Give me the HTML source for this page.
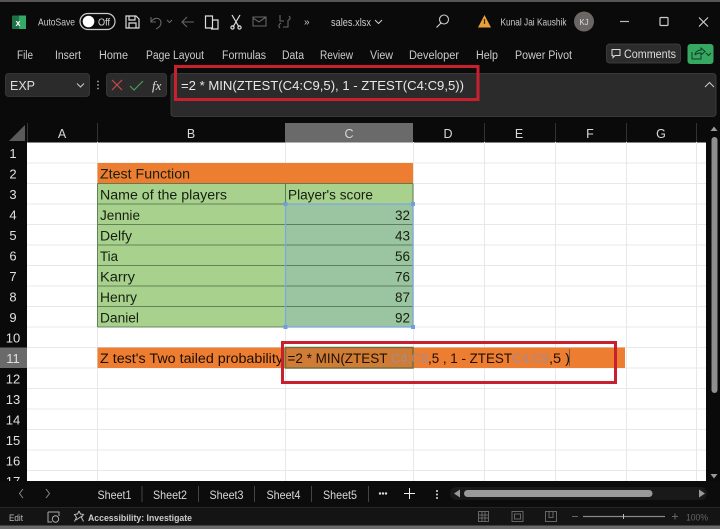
<!DOCTYPE html>
<html><head><meta charset="utf-8"><style>
html,body{margin:0;padding:0;background:#0a0a0a;width:720px;height:529px;overflow:hidden}
svg{display:block}
text{font-family:"Liberation Sans",sans-serif}
</style></head><body>
<svg width="720" height="529" viewBox="0 0 720 529" xmlns="http://www.w3.org/2000/svg">
<rect width="720" height="529" fill="#0a0a0a"/>
<rect width="720" height="2" fill="#555"/>
<!-- title bar -->
<rect x="12" y="15.500" width="14" height="13.500" rx="1" fill="#1e7145"/><rect x="19" y="15.500" width="7" height="13.500" fill="#33a867"/>
<text x="15.500" y="26" font-size="9" font-weight="bold" fill="#fff">x</text>
<text x="38" y="25.500" font-size="10.500" fill="#ccc" textLength="37" lengthAdjust="spacingAndGlyphs">AutoSave</text>
<rect x="80" y="13.500" width="35" height="16" rx="8" fill="none" stroke="#ccc" stroke-width="1.200"/>
<circle cx="88.500" cy="21.500" r="5.800" fill="#fff"/>
<text x="98" y="25.500" font-size="10" fill="#ddd" textLength="12" lengthAdjust="spacingAndGlyphs">Off</text>
<g fill="none" stroke="#ddd" stroke-width="1.200">
<path d="M126 16h10l3 3v9h-13z M129 16v4h6v-4 M129 28v-5h7v5"/>
<path d="M205.500 16h7v12h-7z M212 20h6v9h-7"/>
<path d="M232 15l7 12 M240 15l-7 12"/><circle cx="232.500" cy="27.500" r="1.600"/><circle cx="239.500" cy="27.500" r="1.600"/>
</g>
<g fill="none" stroke="#666" stroke-width="1.100">
<path d="M151 17v5h5 M151 22c3-5 10-5 10 1 0 3-3 5-5 6"/>
<path d="M167 20l2.500 2.500 2.500-2.500"/>
<path d="M194 22h-12 M187 17l-5 5 5 5"/>
<path d="M253 17h13v9h-13z M253 18l6 4 7-5"/>
<path d="M280 15v6h4 M288 20v7h-5 M280 28c-2-2-1-4 1-5 M289 16c2 2 1 4-1 4"/>
</g>
<text x="304" y="25" font-size="10" fill="#ccc">»</text>
<text x="331" y="26" font-size="11" fill="#ccc" textLength="40" lengthAdjust="spacingAndGlyphs">sales.xlsx</text>
<path d="M375 20l3.500 3.500 3.500-3.500" fill="none" stroke="#ccc" stroke-width="1"/>
<circle cx="444" cy="19.500" r="4.500" fill="none" stroke="#ccc" stroke-width="1.100"/><path d="M441 23l-4.500 4.500" stroke="#ccc" stroke-width="1.200"/>
<path d="M484.500 15l6.500 12.500h-13z" fill="#e8a13a"/><path d="M484.500 19v5" stroke="#4a2a00" stroke-width="1.200"/>
<text x="500.500" y="25.500" font-size="10.500" fill="#ccc" textLength="66" lengthAdjust="spacingAndGlyphs">Kunal Jai Kaushik</text>
<circle cx="584" cy="21.500" r="10" fill="#6b6564"/>
<text x="584" y="25" font-size="8" fill="#ddd" text-anchor="middle">KJ</text>
<path d="M620 21.500h9" stroke="#bbb" stroke-width="1.200"/>
<rect x="660" y="17.500" width="8" height="8" rx="1" fill="none" stroke="#ccc" stroke-width="1.200"/>
<path d="M699 17.500l9 9 M708 17.500l-9 9" stroke="#ccc" stroke-width="1.200"/>
<!-- ribbon -->
<g fill="#ccc" font-size="11.500">
<text x="17" y="59" textLength="16" lengthAdjust="spacingAndGlyphs">File</text>
<text x="55" y="59" textLength="26" lengthAdjust="spacingAndGlyphs">Insert</text>
<text x="99" y="59" textLength="29" lengthAdjust="spacingAndGlyphs">Home</text>
<text x="146" y="59" textLength="58" lengthAdjust="spacingAndGlyphs">Page Layout</text>
<text x="222" y="59" textLength="44" lengthAdjust="spacingAndGlyphs">Formulas</text>
<text x="282" y="59" textLength="22" lengthAdjust="spacingAndGlyphs">Data</text>
<text x="320" y="59" textLength="33" lengthAdjust="spacingAndGlyphs">Review</text>
<text x="370" y="59" textLength="23" lengthAdjust="spacingAndGlyphs">View</text>
<text x="409" y="59" textLength="50" lengthAdjust="spacingAndGlyphs">Developer</text>
<text x="476" y="59" textLength="22" lengthAdjust="spacingAndGlyphs">Help</text>
<text x="515" y="59" textLength="57" lengthAdjust="spacingAndGlyphs">Power Pivot</text>
</g>
<rect x="606.500" y="44" width="74" height="19" rx="3" fill="#2c2c2c" stroke="#444" stroke-width="0.800"/>
<path d="M612 49.500h8v6h-5l-2 2v-2h-1z" fill="none" stroke="#ddd" stroke-width="1"/>
<text x="624" y="58" font-size="11.500" fill="#ddd" textLength="52" lengthAdjust="spacingAndGlyphs">Comments</text>
<rect x="687.500" y="44" width="26" height="20" rx="3" fill="#36a862"/>
<path d="M692 52v7h9v-3 M695 55c0-3 3-5 6-5v-2l4 3.500-4 3.500v-2c-2 0-4 0-6 2" fill="none" stroke="#0f3d22" stroke-width="1"/>
<path d="M706 53l2.500 2.500 2.500-2.500" fill="none" stroke="#0f3d22" stroke-width="1.100"/>
<!-- formula row -->
<rect x="5.500" y="73.500" width="84" height="23" rx="3" fill="#2b2b2b" stroke="#3d3d3d" stroke-width="0.800"/>
<text x="10" y="90" font-size="12.500" fill="#ddd">EXP</text>
<path d="M77 83.500l3.500 3.500 3.500-3.500" fill="none" stroke="#ccc" stroke-width="1"/>
<g fill="#aaa"><circle cx="98" cy="81.500" r="0.900"/><circle cx="98" cy="85" r="0.900"/><circle cx="98" cy="88.500" r="0.900"/></g>
<rect x="106.500" y="73.500" width="60" height="23" rx="3" fill="#2b2b2b" stroke="#3d3d3d" stroke-width="0.800"/>
<path d="M112 80l10 10 M122 80l-10 10" stroke="#c94a4a" stroke-width="1.200"/>
<path d="M130 86l4 4 9-9" fill="none" stroke="#4d9a5b" stroke-width="1.200"/>
<text x="152" y="90" font-size="13" font-style="italic" fill="#ddd" style="font-family:'Liberation Serif',serif">fx</text>
<rect x="171" y="73.500" width="545" height="43" rx="3" fill="#2b2b2b" stroke="#444" stroke-width="0.800"/>
<text x="181" y="90" font-size="12.500" fill="#e8e8e8" textLength="283" lengthAdjust="spacingAndGlyphs">=2 * MIN(ZTEST(C4:C9,5), 1 - ZTEST(C4:C9,5))</text>
<path d="M705 87l4.500-4.500 4.500 4.500" fill="none" stroke="#ccc" stroke-width="1"/>
<rect x="175.500" y="66.500" width="302.500" height="33" fill="none" stroke="#c8202f" stroke-width="3"/>
<!-- grid background -->
<rect x="27" y="142.500" width="679" height="338.500" fill="#fff"/>
<g stroke="#e8e8e8" stroke-width="1">
<path d="M97.500 142v339 M285.500 142v339 M413.500 142v339 M484.500 142v339 M555.500 142v339 M626.500 142v339 M696.500 142v339"/>
<path d="M27 163h679 M27 183.500h679 M27 204h679 M27 224.500h679 M27 245h679 M27 265.500h679 M27 286h679 M27 306.500h679 M27 327h679 M27 347.500h679 M27 368h679 M27 388.500h679 M27 409h679 M27 429.500h679 M27 450h679 M27 470.500h679"/>
</g>
<!-- header -->
<rect x="285" y="123" width="128" height="19.500" fill="#6a6a6a"/>
<path d="M25 125v16h-16z" fill="#5a5a5a"/>
<g stroke="#333"><path d="M27.500 123v19 M97.500 123v19 M484.500 123v19 M555.500 123v19 M626.500 123v19 M696.500 123v19"/></g>
<g fill="#d8d8d8" font-size="12.500" text-anchor="middle">
<text x="62" y="138">A</text><text x="191" y="138">B</text><text x="349" y="138">C</text><text x="448" y="138">D</text><text x="519" y="138">E</text><text x="590" y="138">F</text><text x="661" y="138">G</text>
</g>
<rect x="0" y="347.500" width="27" height="20.500" fill="#6a6a6a"/>
<g fill="#e0e0e0" font-size="13" text-anchor="middle">
<text x="13" y="158">1</text><text x="13" y="178.500">2</text><text x="13" y="199">3</text><text x="13" y="219.500">4</text><text x="13" y="240">5</text><text x="13" y="260.500">6</text><text x="13" y="281">7</text><text x="13" y="301.500">8</text><text x="13" y="322">9</text><text x="13" y="342.500">10</text><text x="13" y="363">11</text><text x="13" y="383.500">12</text><text x="13" y="404">13</text><text x="13" y="424.500">14</text><text x="13" y="445">15</text><text x="13" y="465.500">16</text><text x="13" y="486">17</text>
</g>
<!-- table -->
<rect x="97.500" y="163" width="315.500" height="20.500" fill="#ed7d31"/>
<rect x="97.500" y="183.500" width="315.500" height="143.500" fill="#a9d18e"/>
<rect x="285.500" y="204" width="127.500" height="123" fill="#9ac5a0"/>
<g stroke="#4a6a45" stroke-width="0.800" fill="none">
<path d="M97.500 183.500h315.500 M97.500 204h315.500 M97.500 224.500h315.500 M97.500 245h315.500 M97.500 265.500h315.500 M97.500 286h315.500 M97.500 306.500h315.500 M97.500 327h315.500 M97.500 183.500v143.500 M285.500 183.500v143.500 M413 183.500v20.500"/>
</g>
<rect x="285.500" y="204" width="127.500" height="123" fill="none" stroke="#7ea9dc" stroke-width="1.300"/>
<g fill="#6f9fdc"><rect x="283.500" y="202" width="4" height="4"/><rect x="411" y="202" width="4" height="4"/><rect x="283.500" y="325" width="4" height="4"/><rect x="411" y="325" width="4" height="4"/></g>
<g fill="#15200f" font-size="13.500">
<text x="100" y="178.500" textLength="90" lengthAdjust="spacingAndGlyphs">Ztest Function</text>
<text x="100" y="199.500" textLength="127" lengthAdjust="spacingAndGlyphs">Name of the players</text>
<text x="288" y="199.500" textLength="85" lengthAdjust="spacingAndGlyphs">Player's score</text>
<text x="100" y="220" textLength="40" lengthAdjust="spacingAndGlyphs">Jennie</text>
<text x="100" y="240.500" textLength="32" lengthAdjust="spacingAndGlyphs">Delfy</text>
<text x="100" y="261" textLength="18" lengthAdjust="spacingAndGlyphs">Tia</text>
<text x="100" y="281.500" textLength="35" lengthAdjust="spacingAndGlyphs">Karry</text>
<text x="100" y="302" textLength="37" lengthAdjust="spacingAndGlyphs">Henry</text>
<text x="100" y="322.500" textLength="39" lengthAdjust="spacingAndGlyphs">Daniel</text>
</g>
<g fill="#15200f" font-size="13.500" text-anchor="end">
<text x="410" y="220">32</text><text x="410" y="240.500">43</text><text x="410" y="261">56</text><text x="410" y="281.500">76</text><text x="410" y="302">87</text><text x="410" y="322.500">92</text>
</g>
<!-- row 11 -->
<rect x="97.500" y="347.500" width="527.500" height="20.500" fill="#ed7d31"/>
<rect x="285.500" y="347.500" width="127.500" height="20.500" fill="#d07c35" stroke="#6f7040" stroke-width="1.500"/>
<text x="100" y="363" font-size="13.500" fill="#1c0f05" textLength="183" lengthAdjust="spacingAndGlyphs">Z test's Two tailed probability</text>
<g font-size="13.500" fill="#1c0f05">
<text x="287.500" y="363" textLength="100" lengthAdjust="spacingAndGlyphs">=2 * MIN(ZTEST</text>
<text x="391" y="363" fill="#a48c8c" textLength="37" lengthAdjust="spacingAndGlyphs">C4:C9</text>
<text x="428" y="363" textLength="84" lengthAdjust="spacingAndGlyphs">,5 , 1 - ZTEST</text>
<text x="512" y="363" fill="#a48c8c" textLength="37" lengthAdjust="spacingAndGlyphs">C4:C9</text>
<text x="549" y="363" textLength="21" lengthAdjust="spacingAndGlyphs">,5 )</text>
</g>
<path d="M569.500 349v17" stroke="#555" stroke-width="0.800"/>
<rect x="282.500" y="342.500" width="333" height="40" fill="none" stroke="#c8202f" stroke-width="3"/>
<!-- right scrollbar -->
<rect x="706" y="123" width="14" height="358" fill="#0a0a0a"/>
<path d="M714 126.500l3.500 4.500h-7z" fill="#999"/>
<rect x="711.500" y="137" width="6" height="256" rx="3" fill="#8f8f8f"/>
<path d="M714 478.500l3.500-4.500h-7z" fill="#999"/>
<!-- tabs -->
<rect y="481" width="720" height="26" fill="#0c0c0c"/>
<path d="M23 489l-3.500 4.500 3.500 4.500 M46 489l3.500 4.500-3.500 4.500" fill="none" stroke="#888" stroke-width="1"/>
<g fill="#d8d8d8" font-size="12">
<text x="97.500" y="499" textLength="34" lengthAdjust="spacingAndGlyphs">Sheet1</text>
<text x="153" y="499" textLength="34" lengthAdjust="spacingAndGlyphs">Sheet2</text>
<text x="209.500" y="499" textLength="34" lengthAdjust="spacingAndGlyphs">Sheet3</text>
<text x="266.500" y="499" textLength="34" lengthAdjust="spacingAndGlyphs">Sheet4</text>
<text x="323" y="499" textLength="34" lengthAdjust="spacingAndGlyphs">Sheet5</text>
</g>
<path d="M142 486v16 M198.500 486v16 M254.500 486v16 M311.500 486v16 M368.500 486v16" stroke="#444"/>
<g fill="#ddd"><circle cx="380" cy="493.500" r="1.200"/><circle cx="383" cy="493.500" r="1.200"/><circle cx="386" cy="493.500" r="1.200"/>
<circle cx="437" cy="491" r="1"/><circle cx="437" cy="494.500" r="1"/><circle cx="437" cy="498" r="1"/></g>
<path d="M409.500 488v11 M404 493.500h11" stroke="#eee" stroke-width="1"/>
<rect x="450" y="487" width="257" height="13" rx="6.500" fill="#191919"/>
<rect x="464" y="490" width="188.500" height="7" rx="3.500" fill="#9a9a9a"/>
<path d="M454 493.500l6-4v8z M705 493.500l-6-4v8z" fill="#999"/>
<!-- status -->
<rect y="507" width="720" height="19" fill="#141414"/>
<path d="M0 507.500h720" stroke="#262626"/>
<rect y="525.500" width="720" height="3.500" fill="#6a6a6a"/>
<text x="9" y="521" font-size="9.500" fill="#bbb" textLength="14" lengthAdjust="spacingAndGlyphs">Edit</text>
<path d="M48 512h11v4 M48 512v10h4" fill="none" stroke="#aaa" stroke-width="1"/><circle cx="55.500" cy="519" r="3.200" fill="none" stroke="#aaa" stroke-width="1"/>
<path d="M79 511l1.500 3 3 .5-2 3 2 4 M79 511l-1.500 3-3 .5 2 3-2 4 M76 520l6-4" fill="none" stroke="#bbb" stroke-width="1"/>
<text x="88" y="521" font-size="9.500" font-weight="bold" fill="#ccc" textLength="104" lengthAdjust="spacingAndGlyphs">Accessibility: Investigate</text>
<g fill="none" stroke="#666" stroke-width="1">
<path d="M478.500 511.500h10v10h-10z M482 511.500v10 M485 511.500v10 M478.500 515h10 M478.500 518h10"/>
<path d="M512 511.500h11v10h-11z M514.500 514h6v5h-6z"/>
<path d="M545.500 511.500h11v10h-11z M549 511.500v6h4v-6"/>
<path d="M572 516.500h6 M672 516.500h6 M675 513.500v6"/>
</g>
<path d="M583 516.500h82" stroke="#888" stroke-width="1.200"/><path d="M623.500 514v5" stroke="#bbb" stroke-width="1"/>
<text x="686" y="520.500" font-size="9.500" fill="#666" textLength="22" lengthAdjust="spacingAndGlyphs">100%</text>
</svg>
</body></html>
